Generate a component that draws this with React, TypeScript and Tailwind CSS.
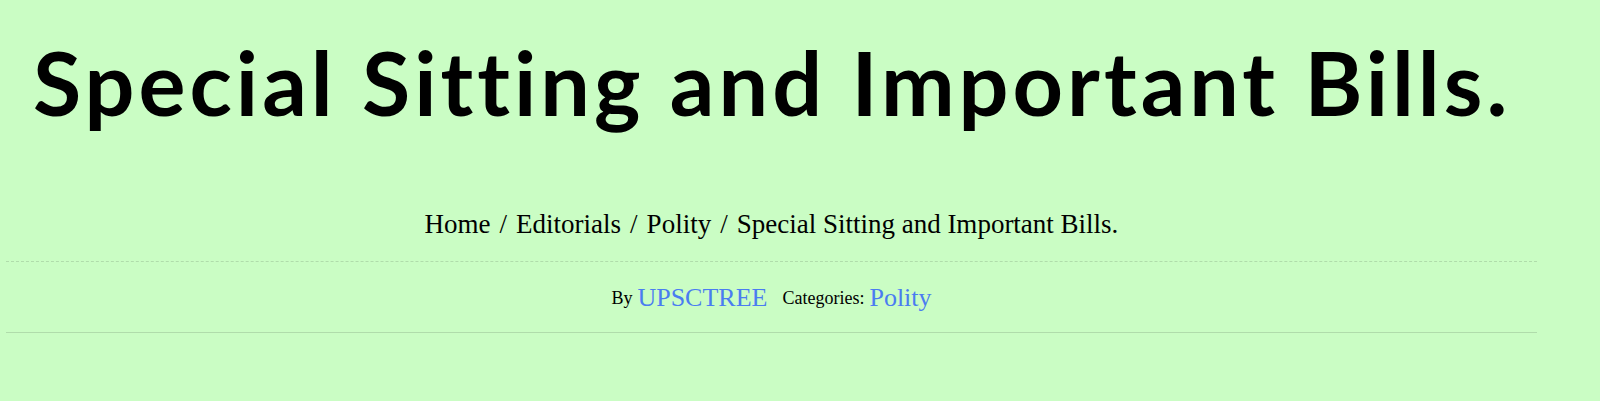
export default function App() {
  return (
    <main className="min-h-[401px] w-full bg-[#cafdc4] text-black">
      <div className="ml-[6px] w-[1531px]">
        <h1 className="pt-[22px] pl-[27px] font-['Lato',sans-serif] text-[88px] font-bold leading-[120px] tracking-[4px] text-black">
          Special Sitting and Important Bills.
        </h1>

        <nav className="mt-[62px] flex justify-center gap-[9px] font-['Liberation_Serif',serif] text-[27px] leading-[40px] text-black">
          <a href="#">Home</a>
          <span>/</span>
          <a href="#">Editorials</a>
          <span>/</span>
          <a href="#">Polity</a>
          <span>/</span>
          <span>Special Sitting and Important Bills.</span>
        </nav>

        <div className="mt-[17px] border-t border-dashed border-[#b0dcab]" />

        <div className="flex h-[70px] items-center justify-center font-['Liberation_Serif',serif] text-black">
          <span className="pt-[2px] text-[18px]">By</span>
          <a href="#" className="ml-[5px] text-[26px] text-[#4a7cf1]">
            UPSCTREE
          </a>
          <span className="ml-[15px] pt-[2px] text-[18px]">Categories:</span>
          <a href="#" className="ml-[5px] text-[26px] text-[#4a7cf1]">
            Polity
          </a>
        </div>

        <div className="border-t border-[#b0dcab]" />
      </div>
    </main>
  );
}
